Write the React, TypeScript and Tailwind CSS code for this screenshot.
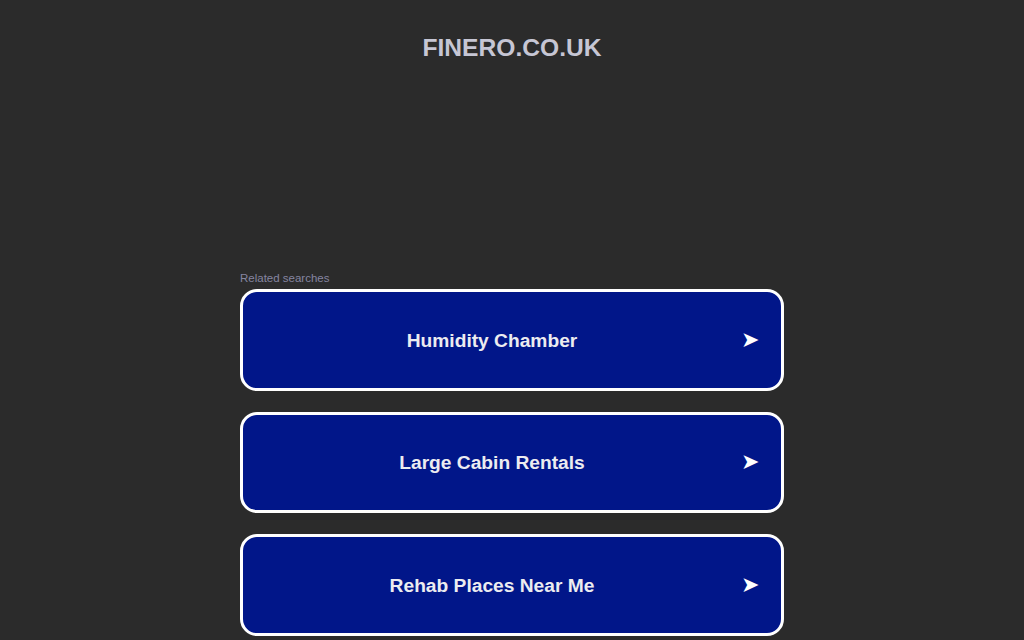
import React from 'react';

const searches = ['Humidity Chamber', 'Large Cabin Rentals', 'Rehab Places Near Me'];

export default function App() {
  return (
    <div className="min-h-screen bg-[#2b2b2b] font-['Liberation_Sans',Arial,sans-serif]">
      <header className="pt-[34px] text-center">
        <h1 className="text-[24.6px] font-bold leading-[28px] text-[#c6c6d4]">FINERO.CO.UK</h1>
      </header>

      <main className="mx-auto mt-[209px] w-[544px]">
        <p className="mb-[4px] text-[11.5px] leading-[14px] text-[#8585a0]">Related searches</p>
        <ul className="flex flex-col gap-[21px]">
          {searches.map((s) => (
            <li key={s}>
              <a
                href="#"
                className="flex h-[101.5px] items-center rounded-[17px] border-[3px] border-white bg-[#011689] text-[#ececf0]"
              >
                <span className="flex-1 pt-[3px] text-center text-[19.2px] font-bold">{s}</span>
                <span className="pr-[22px] text-[22px] leading-none text-white">➤</span>
              </a>
            </li>
          ))}
        </ul>
      </main>
    </div>
  );
}
